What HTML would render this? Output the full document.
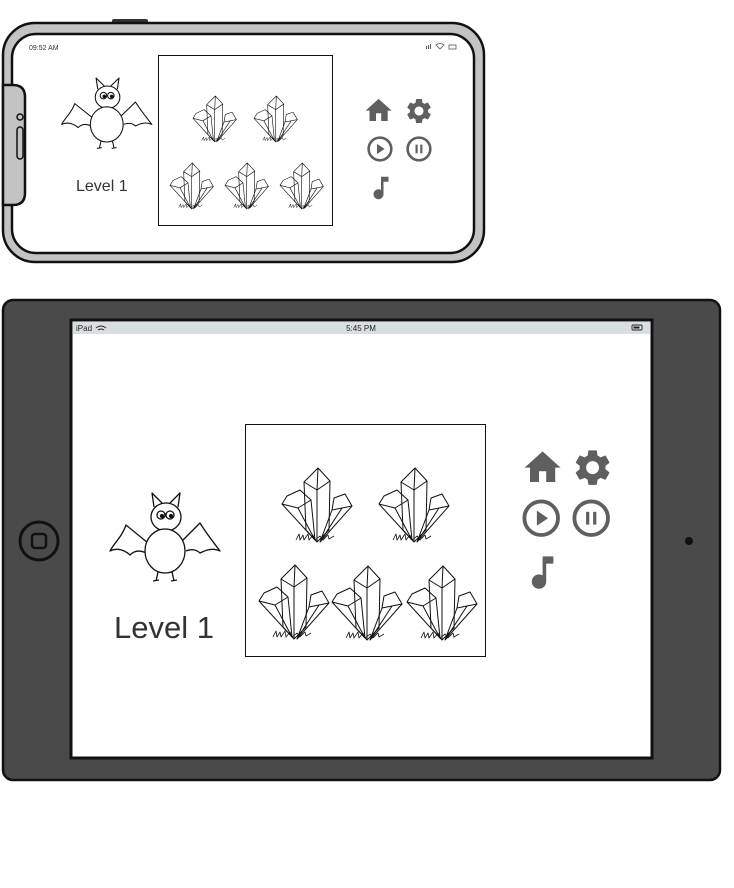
<!DOCTYPE html>
<html><head><meta charset="utf-8"><style>
html,body{margin:0;padding:0;background:#fff;width:734px;height:888px;overflow:hidden}
svg{display:block}
text{font-family:"Liberation Sans",sans-serif}
</style></head><body>
<svg width="734" height="888" viewBox="0 0 734 888" xmlns="http://www.w3.org/2000/svg">
<defs>
<g id="cr" fill="none" stroke="#111" stroke-width="1" stroke-linejoin="round">
  <!-- center crystal -->
  <polygon points="36,0 48,13 47,62 35,74 24,62 22,14"/>
  <polyline points="22,14 35,22 48,13"/>
  <line x1="36" y1="0" x2="35" y2="22"/>
  <line x1="35" y1="22" x2="35" y2="74"/>
  <!-- left crystal -->
  <polygon points="5,28 18,22 29,32 33,72 0,36"/>
  <polyline points="0,36 16,40 29,32"/>
  <line x1="16" y1="40" x2="33" y2="72"/>
  <!-- right crystal -->
  <polygon points="52,30 63,26 70,38 38,74 50,42"/>
  <polyline points="50,42 60,40 70,38"/>
  <line x1="60" y1="40" x2="38" y2="74"/>
  <path d="M14,72 l3,-6 l1,6 l3,-5 l1,5 l4,-6 l1,6 l4,-5 l2,5 l5,-4 l3,4 l5,-5 l1,4 l5,-3" stroke-width="0.8"/>
</g>
<g id="bat" fill="none" stroke="#111" stroke-width="1.3" stroke-linejoin="round">
  <polyline points="46,14 44,0 54,10"/>
  <polyline points="62,10 72,0 70,14"/>
  <ellipse cx="58" cy="24" rx="15" ry="14" fill="#fff"/>
  <circle cx="53" cy="22" r="4"/><circle cx="62" cy="22" r="4"/>
  <circle cx="54" cy="23" r="1.5" fill="#111"/><circle cx="63" cy="23" r="1.5" fill="#111"/>
  <path d="M40,50 L18,32 C14,44 6,50 2,58 C10,54 18,58 22,62 C28,56 34,58 38,60"/>
  <path d="M74,48 L92,30 C98,40 106,50 112,58 C104,54 96,58 92,60 C88,56 82,56 78,58"/>
  <ellipse cx="57" cy="58" rx="20" ry="22" fill="#fff"/>
  <path d="M50,79 L48,88 M45,88 L51,87 M64,79 L66,88 M63,88 L69,87"/>
</g>
<path id="home" d="M10 20v-6h4v6h5v-8h3L12 3 2 12h3v8z"/>
<path id="gear" d="M19.14 12.94c.04-.3.06-.61.06-.94 0-.32-.02-.64-.07-.94l2.03-1.58c.18-.14.23-.41.12-.61l-1.920-3.32c-.12-.22-.37-.29-.59-.22l-2.39.96c-.5-.38-1.03-.7-1.62-.94l-.36-2.54c-.04-.24-.24-.41-.48-.41h-3.84c-.24 0-.43.17-.47.41l-.36 2.54c-.59.24-1.13.57-1.62.94l-2.39-.96c-.22-.08-.47 0-.59.22L2.74 8.87c-.12.21-.08.47.12.61l2.03 1.58c-.05.3-.09.63-.09.94s.02.64.07.94l-2.03 1.58c-.18.14-.23.41-.12.61l1.92 3.32c.12.22.37.29.59.22l2.39-.96c.5.38 1.03.7 1.62.94l.36 2.54c.05.24.24.41.48.41h3.84c.24 0 .44-.17.47-.41l.36-2.54c.59-.24 1.13-.56 1.62-.94l2.39.96c.22.08.47 0 .59-.22l1.92-3.32c.12-.22.07-.47-.12-.61l-2.010-1.580zM12 15.6c-1.98 0-3.6-1.62-3.6-3.6s1.62-3.6 3.6-3.6 3.6 1.62 3.6 3.6-1.62 3.6-3.6 3.6z"/>
<g id="play"><circle cx="12" cy="12" r="10.5" fill="none" stroke="#5f5f5f" stroke-width="2.4"/><path d="M9.3 7.3v9.4l7-4.7z" fill="#5f5f5f"/></g>
<g id="pause"><circle cx="12" cy="12" r="10.5" fill="none" stroke="#5f5f5f" stroke-width="2.4"/><rect x="8.8" y="8" width="2" height="8" fill="#5f5f5f"/><rect x="13.2" y="8" width="2" height="8" fill="#5f5f5f"/></g>
<path id="note" d="M12 3v10.55c-.59-.34-1.27-.55-2-.55-2.21 0-4 1.790-4 4s1.79 4 4 4 4-1.79 4-4V7h4V3h-6z"/>
</defs>

<!-- PHONE -->
<rect x="112" y="19" width="36" height="5" rx="2" fill="#333"/>
<rect x="3" y="23" width="481" height="239" rx="32" fill="#c3c3c3" stroke="#111" stroke-width="2.5"/>
<rect x="12" y="34" width="462" height="219" rx="24" fill="#fff" stroke="#111" stroke-width="2.5"/>
<path d="M3,85 h10 q12,0 12,12 v96 q0,12 -12,12 h-10 z" fill="#c3c3c3" stroke="#111" stroke-width="2.5"/>
<circle cx="20" cy="117" r="3" fill="none" stroke="#111" stroke-width="1.5"/>
<rect x="17" y="127" width="6" height="32" rx="3" fill="none" stroke="#111" stroke-width="1.5"/>
<text x="29" y="50" font-size="7" fill="#333">09:52 AM</text>
<g fill="#555"><rect x="426" y="46" width="1" height="3"/><rect x="428" y="45" width="1" height="4"/><rect x="430" y="44" width="1" height="5"/></g>
<path d="M436,45 q4,-3 8,0 l-4,4z" fill="none" stroke="#555" stroke-width="0.8"/>
<rect x="449" y="45" width="7" height="4" fill="none" stroke="#555" stroke-width="0.8"/>
<use href="#bat" transform="translate(60,78) scale(0.82,0.8)"/>
<text x="76" y="191" font-size="16" fill="#333">Level 1</text>
<rect x="158.5" y="55.5" width="174" height="170" fill="#fff" stroke="#111" stroke-width="1"/>
<use href="#cr" transform="translate(193,96) scale(0.62)"/>
<use href="#cr" transform="translate(254,96) scale(0.62)"/>
<use href="#cr" transform="translate(170,163) scale(0.62)"/>
<use href="#cr" transform="translate(225,163) scale(0.62)"/>
<use href="#cr" transform="translate(280,163) scale(0.62)"/>
<g fill="#5f5f5f">
<use href="#home" transform="translate(363,95) scale(1.3)"/>
<use href="#gear" transform="translate(404,96) scale(1.25)"/>
<use href="#note" transform="translate(366,173) scale(1.25)"/>
</g>
<use href="#play" transform="translate(367,136) scale(1.08)"/>
<use href="#pause" transform="translate(406,136) scale(1.08)"/>

<!-- IPAD -->
<rect x="3" y="300" width="717" height="480" rx="10" fill="#4a4a4a" stroke="#111" stroke-width="2.5"/>
<rect x="71" y="320" width="581" height="438" fill="#fff" stroke="#111" stroke-width="3"/>
<rect x="73" y="322" width="577" height="12" fill="#d9dfe1"/>
<text x="76" y="331" font-size="8" fill="#222">iPad</text>
<path d="M96,328 q5,-4 10,0 M98,330 q3,-2 6,0" fill="none" stroke="#222" stroke-width="0.9"/>
<text x="361" y="331" font-size="8" fill="#222" text-anchor="middle">5:45 PM</text>
<rect x="632" y="325" width="10" height="5" rx="1" fill="none" stroke="#222" stroke-width="0.9"/>
<rect x="633.5" y="326.5" width="6" height="2" fill="#222"/>
<circle cx="39" cy="541" r="19" fill="#4a4a4a" stroke="#111" stroke-width="3"/>
<rect x="32" y="534" width="14" height="14" rx="3" fill="none" stroke="#111" stroke-width="2.5"/>
<circle cx="689" cy="541" r="4" fill="#111"/>
<use href="#bat" transform="translate(108,493)"/>
<text x="114" y="638" font-size="31" fill="#333">Level 1</text>
<rect x="245.5" y="424.5" width="240" height="232" fill="#fff" stroke="#111" stroke-width="1"/>
<use href="#cr" transform="translate(282,468)"/>
<use href="#cr" transform="translate(379,468)"/>
<use href="#cr" transform="translate(259,565)"/>
<use href="#cr" transform="translate(332,566)"/>
<use href="#cr" transform="translate(407,566)"/>
<g fill="#5f5f5f">
<use href="#home" transform="translate(521,446) scale(1.8)"/>
<use href="#gear" transform="translate(571,446) scale(1.8)"/>
<use href="#note" transform="translate(521,551) scale(1.8)"/>
</g>
<use href="#play" transform="translate(522,499) scale(1.6)"/>
<use href="#pause" transform="translate(572,499) scale(1.6)"/>
</svg>
</body></html>
